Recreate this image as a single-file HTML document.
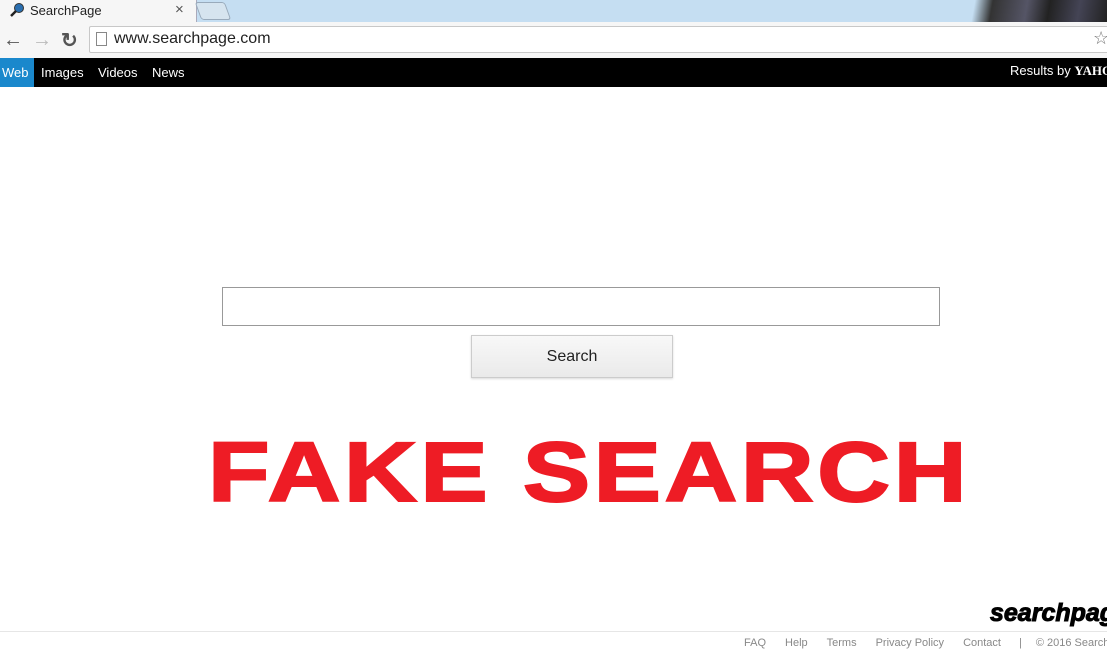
<!DOCTYPE html>
<html><head><style>
body{margin:0;width:1107px;height:653px;overflow:hidden;background:#fff;font-family:"Liberation Sans",Arial,sans-serif;position:relative}
.abs{position:absolute}
</style></head><body>
<div class="abs" style="left:0;top:0;width:1107px;height:22px;background:#c5def2"></div>
<div class="abs" style="left:960px;top:0;width:147px;height:22px;background:linear-gradient(100deg,#c5def2 0,#c5def2 10%,#333 22%,#556 45%,#222 60%,#445 80%,#222 100%)"></div>
<div class="abs" style="left:0;top:0;width:196px;height:22px;background:#f6f6f6;border-right:1px solid #aab"></div>
<div class="abs" style="left:198px;top:2px;width:28px;height:16px;background:#d6e4ef;border:1px solid #9ab;border-radius:3px;transform:skewX(20deg)"></div>
<svg class="abs" style="left:10px;top:2px" width="16" height="16"><circle cx="9" cy="6" r="4.5" fill="#2a6fb0" stroke="#333"/><line x1="6" y1="9" x2="1" y2="14" stroke="#222" stroke-width="2.5"/></svg>
<div class="abs" style="left:30px;top:3px;font-size:13px;color:#222">SearchPage</div>
<div class="abs" style="left:175px;top:1px;font-size:15px;color:#555">×</div>
<div class="abs" style="left:0;top:22px;width:1107px;height:36px;background:#f6f6f6;border-bottom:1px solid #bbb"></div>
<div class="abs" style="left:3px;top:29px;font-size:20px;color:#555">←</div>
<div class="abs" style="left:32px;top:29px;font-size:20px;color:#bbb">→</div>
<div class="abs" style="left:61px;top:28px;font-size:20px;color:#555;font-weight:bold">↻</div>
<div class="abs" style="left:89px;top:26px;width:1030px;height:25px;background:#fff;border:1px solid #c8c8c8;border-radius:2px"></div>
<div class="abs" style="left:96px;top:32px;width:9px;height:12px;border:1px solid #888;background:#fff"></div>
<div class="abs" style="left:114px;top:30px;font-size:16px;color:#222">www.searchpage.com</div>
<div class="abs" style="left:1093px;top:28px;font-size:18px;color:#777">☆</div>
<div class="abs" style="left:0;top:58px;width:1107px;height:29px;background:#000"></div>
<div class="abs" style="left:0;top:58px;width:34px;height:29px;background:#1a88cc"></div>
<div class="abs" style="left:2px;top:65px;font-size:13px;color:#fff">Web</div>
<div class="abs" style="left:41px;top:65px;font-size:13px;color:#fff">Images</div>
<div class="abs" style="left:98px;top:65px;font-size:13px;color:#fff">Videos</div>
<div class="abs" style="left:152px;top:65px;font-size:13px;color:#fff">News</div>
<div class="abs" style="left:1010px;top:63px;font-size:13px;color:#fff;white-space:nowrap">Results by <span style="font-family:'Liberation Serif',serif;font-weight:bold">YAHOO</span></div>
<div class="abs" style="left:222px;top:287px;width:716px;height:37px;border:1px solid #999;background:#fff"></div>
<div class="abs" style="left:471px;top:335px;width:200px;height:41px;border:1px solid #ccc;background:linear-gradient(#f8f8f8,#eaeaea);box-shadow:0 1px 2px rgba(0,0,0,.15);text-align:center;line-height:41px;font-size:16px;color:#222">Search</div>
<div class="abs" style="left:208px;top:424px;font-size:84px;font-weight:bold;color:#ee1c25;white-space:nowrap;letter-spacing:3px;transform:scaleX(1.2);transform-origin:0 0;-webkit-text-stroke:2px #ee1c25">FAKE SEARCH</div>
<div class="abs" style="left:990px;top:599px;font-size:25px;font-weight:900;font-style:italic;color:#000;white-space:nowrap;-webkit-text-stroke:1px #000">searchpage</div>
<div class="abs" style="left:0;top:631px;width:1107px;height:1px;background:#e6e6e6"></div>
<div class="abs" style="left:744px;top:637px;font-size:11px;color:#888;white-space:nowrap;word-spacing:0">FAQ<span style="margin-left:19px">Help</span><span style="margin-left:19px">Terms</span><span style="margin-left:19px">Privacy Policy</span><span style="margin-left:19px">Contact</span><span style="margin-left:18px">|</span><span style="margin-left:14px">© 2016 Searchpage</span></div>
</body></html>
